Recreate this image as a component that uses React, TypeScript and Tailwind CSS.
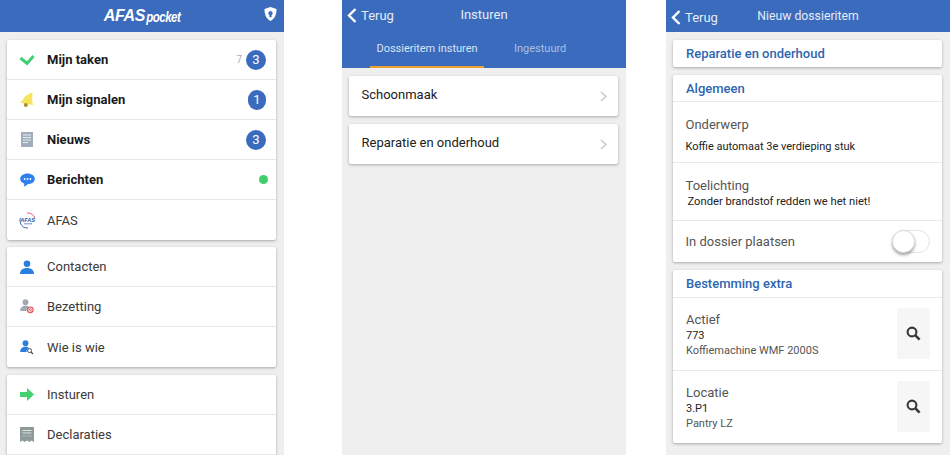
import React from "react";

const Check = () => (
  <svg width="16" height="12" viewBox="0 0 16 12"><path d="M1.5 4 L8 9.5 L14.5 2" fill="none" stroke="#3fcf72" strokeWidth="3" /></svg>
);
const Bell = () => (
  <svg width="16" height="18" viewBox="0 0 16 18">
    <path d="M13.5 1 C11 3 8 3.5 6 5.5 C4.5 7 5 9 1 11 C4 13 10 13.5 14 14 C12.5 10 13.5 5 13.5 1Z" fill="#f7e35c" />
    <circle cx="6.8" cy="14" r="2" fill="#a8912e" />
  </svg>
);
const News = () => (
  <svg width="12" height="15" viewBox="0 0 12 15">
    <rect width="12" height="15" fill="#9fadbc" />
    <path d="M2 3h8M2 5.5h8M2 8h8M2 10.5h5" stroke="#e8edf1" strokeWidth="1" />
  </svg>
);
const Chat = () => (
  <svg width="15" height="14" viewBox="0 0 15 14">
    <path d="M7.5 0.5C11.5 0.5 14.8 2.8 14.8 6 C14.8 9 11.5 11 7.8 11 C6.8 12.5 5 13.5 3.5 13.6 C4.2 12.6 4.4 11.4 4.2 10.5 C1.8 9.6 0.2 8 0.2 6 C0.2 2.8 3.5 0.5 7.5 0.5Z" fill="#2f80ed" />
    <circle cx="4.6" cy="6" r="0.9" fill="#fff" /><circle cx="7.5" cy="6" r="0.9" fill="#fff" /><circle cx="10.4" cy="6" r="0.9" fill="#fff" />
  </svg>
);
const AfasIcon = () => (
  <svg width="17" height="17" viewBox="0 0 17 17">
    <path d="M8 1 A7.5 7.5 0 0 1 16 6.5" fill="none" stroke="#d2344a" strokeWidth="0.8" />
    <path d="M1.4 6 A7.5 7.5 0 0 0 1.4 11 A7.5 7.5 0 0 0 9 16" fill="none" stroke="#3568b8" strokeWidth="1" />
    <text x="8.5" y="9.8" textAnchor="middle" fontSize="5.5" fontWeight="700" fontStyle="italic" fill="#2c5aa8" fontFamily="Liberation Sans, sans-serif">AFAS</text>
    <rect x="5" y="11" width="8" height="1.5" fill="#9db4d8" />
  </svg>
);
const Person = () => (
  <svg width="14" height="14" viewBox="0 0 14 14">
    <circle cx="7" cy="3.8" r="3.3" fill="#2a7de1" />
    <path d="M0 14C0 10 3 8 7 8s7 2 7 6Z" fill="#2a7de1" />
  </svg>
);
const PersonBadge = ({ color, kind }: { color: string; kind: "block" | "search" }) => (
  <svg width="14" height="15" viewBox="0 0 14 15">
    <circle cx="5.5" cy="3.2" r="2.9" fill={color} />
    <path d="M0 12C0.5 8.5 2.5 6.8 5.5 6.6C7.5 6.8 8.5 7.5 8.8 8.2C7 9 6.4 10.5 6.6 12Z" fill={color} />
    {kind === "block" ? (
      <g>
        <circle cx="10.3" cy="10.8" r="3.4" fill="#e0535b" />
        <circle cx="10.3" cy="10.8" r="1.8" fill="none" stroke="#fff" strokeWidth="0.8" />
        <path d="M9 12L11.6 9.6" stroke="#fff" strokeWidth="0.8" />
      </g>
    ) : (
      <g>
        <circle cx="9.6" cy="10.6" r="2" fill="none" stroke="#44505c" strokeWidth="1" />
        <path d="M11 12L13 14" stroke="#44505c" strokeWidth="1.2" />
      </g>
    )}
  </svg>
);
const Arrow = () => (
  <svg width="14" height="13" viewBox="0 0 14 13"><path d="M0 4H7V0L14 6.5L7 13V9H0Z" fill="#45d070" /></svg>
);
const Receipt = () => (
  <svg width="14" height="15" viewBox="0 0 14 15">
    <path d="M0 0H14V15L11.5 13.5L9.5 15L7 13.5L4.5 15L2.5 13.5L0 15Z" fill="#8d9a98" />
    <path d="M2.5 3.5H11.5M2.5 6H11.5" stroke="#dfe4e3" strokeWidth="1.1" />
    <path d="M2.5 9H11.5" stroke="#dfe4e3" strokeWidth="0.8" strokeDasharray="1 1" />
  </svg>
);
const Shield = () => (
  <svg width="13" height="14" viewBox="0 0 13 14">
    <path fillRule="evenodd" d="M6.5 0L12.5 2C12.6 7 11 11.5 6.5 14C2 11.5 0.4 7 0.5 2ZM6.5 4A2.2 2.2 0 0 0 5.4 8.1V10.2H7.6V8.1A2.2 2.2 0 0 0 6.5 4Z" fill="#fff" />
  </svg>
);
const Back = () => (
  <svg width="10" height="15" viewBox="0 0 10 15" className="shrink-0"><path d="M8.5 1L2 7.5L8.5 14" fill="none" stroke="#fff" strokeWidth="2.4" /></svg>
);
const Chevron = () => (
  <svg width="7" height="11" viewBox="0 0 7 11"><path d="M1 1L6 5.5L1 10" fill="none" stroke="#c4c6c8" strokeWidth="1.3" /></svg>
);
const Search = () => (
  <svg width="15" height="15" viewBox="0 0 15 15">
    <circle cx="6" cy="6" r="4.4" fill="none" stroke="#33383c" strokeWidth="2.1" />
    <path d="M9.4 9.4L13.6 13.6" stroke="#33383c" strokeWidth="2.6" />
  </svg>
);

const Badge = ({ n, w = "w-5" }: { n: number; w?: string }) => (
  <span className={`flex h-5 ${w} items-center justify-center rounded-full bg-[#3a6bbd] text-[13px] text-white`}>{n}</span>
);

const Card = ({ children, mb = "mb-2" }: { children: React.ReactNode; mb?: string }) => (
  <div className={`ml-[7px] mr-[8px] ${mb} rounded-[2px] bg-white shadow-[0_1px_3px_rgba(0,0,0,0.3)] divide-y divide-[#e8e8e8]`}>{children}</div>
);

const MenuRow = ({ icon, label, bold, right }: { icon: React.ReactNode; label: string; bold?: boolean; right?: React.ReactNode }) => (
  <div className="flex h-10 items-center pr-[10px]">
    <span className="flex w-10 shrink-0 items-center justify-center">{icon}</span>
    <span className={`pt-[1px] text-[13px] ${bold ? "font-bold text-[#1a1a1a]" : "text-[#3a3a3a]"}`}>{label}</span>
    <span className="ml-auto flex items-center">{right}</span>
  </div>
);

const Phone = ({ children, className = "" }: { children: React.ReactNode; className?: string }) => (
  <div className={`h-[455px] w-[284px] shrink-0 overflow-hidden bg-[#efefef] ${className}`}>{children}</div>
);

const BackLink = () => (
  <div className="flex items-center gap-1 text-[13px] text-[#e6ecf7]">
    <Back />
    <span>Terug</span>
  </div>
);

const SectionTitle = ({ children, h }: { children: React.ReactNode; h: string }) => (
  <div className={`flex ${h} items-center px-[13px] text-[13px] font-medium text-[#2d66b0]`}>{children}</div>
);

const LookupRow = ({ title, code, name }: { title: string; code: string; name: string }) => (
  <div className="flex h-[72.5px] items-center justify-between pl-[13px] pr-[12px]">
    <div className="pt-[2px]">
      <div className="text-[13px] leading-[17px] text-[#555]">{title}</div>
      <div className="text-[11px] leading-[15px] text-[#222]">{code}</div>
      <div className="text-[11px] leading-[16px] text-[#555]">{name}</div>
    </div>
    <div className="flex h-[51px] w-[33px] items-center justify-center rounded-[2px] bg-[#f6f6f6]"><Search /></div>
  </div>
);

export default function App() {
  return (
    <div className="flex h-[455px] w-[950px] overflow-hidden bg-white font-['Roboto',sans-serif]">
      <Phone>
        <div className="relative mb-2 flex h-8 items-center justify-center bg-[#3a6bbd]">
          <span className="flex items-baseline font-['Liberation_Sans',sans-serif] italic text-white">
            <span className="text-[16px] font-bold tracking-[-0.3px]">AFAS</span>
            <span className="ml-[1px] inline-block scale-y-[1.3] text-[11.5px] font-bold tracking-[-0.5px]">pocket</span>
          </span>
          <span className="absolute right-[7px] top-[7px]"><Shield /></span>
        </div>
        <Card mb="mb-[7px]">
          <MenuRow icon={<Check />} label="Mijn taken" bold right={<><span className="mr-1 text-[10px] text-[#aaa]">7</span><Badge n={3} /></>} />
          <MenuRow icon={<Bell />} label="Mijn signalen" bold right={<Badge n={1} w="w-[18px]" />} />
          <MenuRow icon={<News />} label="Nieuws" bold right={<Badge n={3} />} />
          <MenuRow icon={<Chat />} label="Berichten" bold right={<span className="-mr-[2px] h-[9px] w-[9px] rounded-full bg-[#3ecf6c]" />} />
          <MenuRow icon={<AfasIcon />} label="AFAS" />
        </Card>
        <Card>
          <MenuRow icon={<Person />} label="Contacten" />
          <MenuRow icon={<PersonBadge color="#a0a8b2" kind="block" />} label="Bezetting" />
          <MenuRow icon={<PersonBadge color="#2a7de1" kind="search" />} label="Wie is wie" />
        </Card>
        <Card>
          <MenuRow icon={<Arrow />} label="Insturen" />
          <MenuRow icon={<Receipt />} label="Declaraties" />
          <div className="h-10" />
        </Card>
      </Phone>

      <Phone className="ml-[58px]">
        <div className="mb-2 h-[68px] bg-[#3a6bbd]">
          <div className="relative flex h-[29px] items-center justify-center">
            <div className="absolute left-[5px] top-[6px]"><BackLink /></div>
            <span className="text-[13px] text-[#e6ecf7]">Insturen</span>
          </div>
          <div className="flex h-[39px] pl-[28px]">
            <div className="flex w-[114px] items-center justify-center border-b-2 border-[#eda02f] pt-[3px] text-[11px] text-[#dbe4f3]">Dossieritem insturen</div>
            <div className="ml-[30px] flex items-center pt-[1px] text-[11px] text-[#a9c0e4]">Ingestuurd</div>
          </div>
        </div>
        {["Schoonmaak", "Reparatie en onderhoud"].map((t) => (
          <Card key={t}>
            <div className="flex h-10 items-center justify-between pb-[3px] pl-[12.5px] pr-[11px]">
              <span className="text-[13px] text-[#222]">{t}</span>
              <span className="pt-[3px]"><Chevron /></span>
            </div>
          </Card>
        ))}
      </Phone>

      <Phone className="ml-[40px]">
        <div className="relative mb-2 flex h-8 items-center justify-center bg-[#3a6bbd]">
          <div className="absolute left-[5px] top-[8px]"><BackLink /></div>
          <span className="text-[12.25px] text-[#e6ecf7]">Nieuw dossieritem</span>
        </div>
        <Card>
          <SectionTitle h="h-[27px]">Reparatie en onderhoud</SectionTitle>
        </Card>
        <Card>
          <SectionTitle h="h-[27px] pt-[1px]">Algemeen</SectionTitle>
          <div className="flex h-[61px] flex-col pl-[12.5px] pt-[14px]">
            <span className="text-[13px] leading-[17px] text-[#555]">Onderwerp</span>
            <span className="mt-[6px] text-[11px] leading-[15px] text-[#222]">Koffie automaat 3e verdieping stuk</span>
          </div>
          <div className="flex h-[58px] flex-col pl-[12.5px] pt-[14px]">
            <span className="text-[13px] leading-[17px] text-[#555]">Toelichting</span>
            <span className="ml-[2px] text-[11.2px] leading-[15px] text-[#222]">Zonder brandstof redden we het niet!</span>
          </div>
          <div className="flex h-[41px] items-center justify-between pl-[12.5px] pr-[12px]">
            <span className="pt-[1px] text-[13px] text-[#555]">In dossier plaatsen</span>
            <span className="relative h-[23px] w-[38px] rounded-full border border-[#e4e4e4] bg-white">
              <span className="absolute -left-[1px] -top-[1px] h-[23px] w-[23px] rounded-full border border-[#ddd] bg-white shadow-[0_2px_3px_rgba(0,0,0,0.35)]" />
            </span>
          </div>
        </Card>
        <Card>
          <SectionTitle h="h-[28px]">Bestemming extra</SectionTitle>
          <LookupRow title="Actief" code="773" name="Koffiemachine WMF 2000S" />
          <LookupRow title="Locatie" code="3.P1" name="Pantry LZ" />
        </Card>
      </Phone>
    </div>
  );
}
